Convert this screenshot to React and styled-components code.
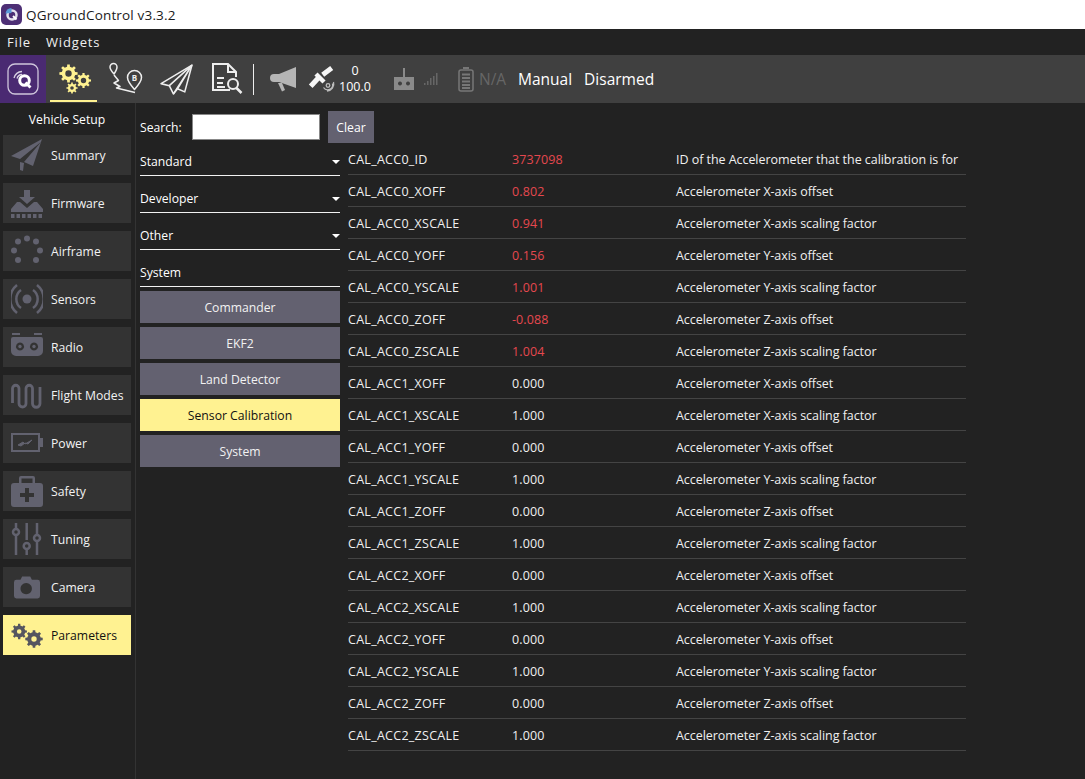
import React from "react";
import styled, { createGlobalStyle } from "styled-components";

const Global = createGlobalStyle`
  html, body { margin: 0; padding: 0; background: #222222; }
  body { font-family: "Open Sans", "Liberation Sans", sans-serif; font-size: 12.2px; color: #fff; }
  * { box-sizing: border-box; }
`;

const Page = styled.div`width: 1085px; height: 779px; overflow: hidden; display: flex; flex-direction: column; background: #222;`;
const TitleBar = styled.div`height: 29px; background: #fff; color: #1a1a1a; display: flex; align-items: center; gap: 4px; padding-left: 1px; font-size: 13.5px; letter-spacing: .17px;`;
const MenuBar = styled.div`height: 26px; background: #222; display: flex; align-items: center; gap: 15px; padding-left: 7px; font-size: 13px; letter-spacing: .85px; color: #f0f0f0;`;
const ToolBar = styled.div`height: 48px; background: #404040; display: flex; align-items: center; flex: none;`;
const LogoTile = styled.div`width: 46px; height: 48px; background: #4a2a72; display: flex; align-items: center; justify-content: center;`;
const ToolSlot = styled.div`
  width: ${p => p.$w}px; margin-left: ${p => p.$ml || 0}px; height: 48px; position: relative; flex: none;
  display: flex; align-items: center; justify-content: center;
  svg { overflow: visible; flex: none; }
`;
const ActiveBar = styled.div`position: absolute; left: 0; right: 0; bottom: 1px; height: 2px; background: #fff291;`;
const ToolDivider = styled.div`width: 1px; height: 31px; background: #eee; margin-left: 10px; flex: none;`;
const Counts = styled.div`width: 40px; margin-left: 1px; text-align: center; font-size: 12.5px; line-height: 16px; color: #fff; flex: none;`;
const NA = styled.div`margin-left: 5px; width: 34px; font-size: 15.5px; color: #666; flex: none;`;
const ModeText = styled.div`margin-left: ${p => p.$ml}px; font-size: 15.5px; color: #fff; flex: none;`;

const Main = styled.div`flex: 1; display: flex; min-height: 0;`;
const Side = styled.div`width: 136px; flex: none; border-right: 1px solid #333; padding: 9px 4px 0 3px; display: flex; flex-direction: column; gap: 8px;`;
const SideTitle = styled.div`height: 15px; line-height: 15px; text-align: center; color: #fff;`;
const SideButton = styled.div`
  height: 40px; display: flex; align-items: center; gap: 8px; padding-left: 8px; flex: none;
  background: ${p => p.$on ? "#fff291" : "#333333"}; color: ${p => p.$on ? "#111" : "#f2f2f2"};
`;
const SideIcon = styled.span`
  width: 32px; height: 32px; flex: none; display: flex; align-items: center; justify-content: center;
  color: ${p => p.$on ? "#55555f" : "#62626f"};
`;

const Filter = styled.div`width: 212px; padding: 8px 0 0 4px; flex: none;`;
const SearchRow = styled.div`display: flex; align-items: center; height: 32px;`;
const SearchLabel = styled.div`width: 52px; flex: none;`;
const SearchBox = styled.input`width: 128px; height: 26px; flex: none; border: 1px solid #888; background: #fff; padding: 0; outline: none;`;
const ClearButton = styled.button`width: 46px; height: 32px; margin-left: 8px; border: 0; padding: 0; background: #636170; color: #fff; font: inherit; flex: none;`;
const GroupList = styled.div`display: flex; flex-direction: column;`;
const Group = styled.div`
  width: 200px; height: 37px; display: flex; align-items: flex-end; justify-content: space-between;
  border-bottom: 1px solid #f2f2f2; padding-bottom: 5px;
  &:first-child { height: 33px; }
`;
const Caret = styled.span`width: 0; height: 0; border: 4px solid transparent; border-top: 4px solid #fff; margin-bottom: 2px;`;
const SubList = styled.div`margin-top: 4px; display: flex; flex-direction: column; gap: 4px;`;
const SubButton = styled.div`
  width: 200px; height: 32px; display: flex; align-items: center; justify-content: center;
  background: ${p => p.$on ? "#fff291" : "#636170"}; color: ${p => p.$on ? "#111" : "#f2f2f2"};
`;

const Table = styled.div`width: 618px; padding-top: 40px; flex: none;`;
const Row = styled.div`display: grid; grid-template-columns: 164px 164px 1fr; height: 32px; border-bottom: 1px solid #444; padding-top: 1px; align-items: center; white-space: nowrap;`;
const NameCell = styled.div`color: #f0f0f0; font-size: 12.5px; letter-spacing: .28px;`;
const ValueCell = styled.div`color: ${p => p.$red ? "#e5484f" : "#f0f0f0"}; font-size: 12.5px; letter-spacing: .1px;`;
const DescCell = styled.div`color: #f0f0f0; font-size: 12.5px; letter-spacing: -.05px;`;

const gearPath = (cx, cy, ro, ri, hole, n = 8) => {
  let d = "";
  const step = (Math.PI * 2) / n;
  for (let i = 0; i < n; i++) {
    const a = i * step;
    const pts = [[ri, a - step * .5], [ri, a - step * .27], [ro, a - step * .18], [ro, a + step * .18], [ri, a + step * .27]];
    pts.forEach(([r, t], k) => {
      d += `${i === 0 && k === 0 ? "M" : "L"}${(cx + r * Math.cos(t)).toFixed(2)} ${(cy + r * Math.sin(t)).toFixed(2)}`;
    });
  }
  d += `Z M${cx + hole} ${cy}A${hole} ${hole} 0 1 0 ${cx - hole} ${cy}A${hole} ${hole} 0 1 0 ${cx + hole} ${cy}Z`;
  return d;
};

const TitleLogo = () => (
  <svg width="21" height="21" viewBox="0 0 21 21">
    <rect width="21" height="21" rx="5" fill="#4d2f75" />
    <circle cx="11" cy="11" r="4.500" fill="none" stroke="#e6e2ee" strokeWidth="2.500" />
    <path d="M4.500 9.500a6.500 6.500 0 0 1 6-5.500v5z" fill="#5b9ad8" />
    <path d="M12 12l3.500 3.500" stroke="#fff" strokeWidth="2" />
  </svg>
);
const QLogo = () => (
  <svg width="32" height="32" viewBox="0 0 32 32">
    <rect x="1" y="1" width="30" height="30" rx="7" fill="none" stroke="#cfc6dc" strokeWidth="1.300" />
    <circle cx="17.500" cy="17.500" r="4.800" fill="none" stroke="#fff" strokeWidth="3" />
    <path d="M18.500 19.500l5 5" stroke="#fff" strokeWidth="2.800" />
    <path d="M7 15a9 9 0 0 1 8-6.500M10 15.500a5.500 5.500 0 0 1 5-4" fill="none" stroke="#d8d2e2" strokeWidth="1.300" />
  </svg>
);
const ToolGears = () => (
  <svg width="32" height="32" viewBox="0 0 32 32" fill="#fff291" fillRule="evenodd">
    <path d={gearPath(10.5, 10.5, 9.2, 6.8, 3.2)} />
    <path d={gearPath(25.500, 17.500, 7.600, 5.600, 2.700)} />
    <path d={gearPath(14, 25, 5.600, 4.100, 1.800)} />
  </svg>
);
const ParamGears = () => (
  <svg width="32" height="32" viewBox="0 0 32 32" fill="currentColor" fillRule="evenodd">
    <path d={gearPath(8.2, 12.5, 7.8, 6, 2.300)} />
    <path d={gearPath(23, 20, 8.800, 6.800, 2.700)} />
  </svg>
);
const PlanIcon = () => (
  <svg width="32" height="32" viewBox="0 0 32 32" fill="none" stroke="#eee" strokeWidth="1.500" strokeLinejoin="round">
    <path d="M3.500 0.500a3.500 3.500 0 0 1 3.500 3.500c0 2.500-3 7-3 7s-4-4.500-4-7a3.500 3.500 0 0 1 3.500-3.500z" />
    <path d="M24.500 7.500a7 7 0 0 1 7 7c0 4-7 12-7 12s-7-8-7-12a7 7 0 0 1 7-7z" />
    <path d="M4 12l4.500 5.500-4.500 2.500 6 3.500-3.500 1.500 18.500 4.500" />
    <text x="24.500" y="17.500" fontSize="8" fontWeight="700" fontFamily="Open Sans, sans-serif" textAnchor="middle" fill="#eee" stroke="none">B</text>
  </svg>
);
const FlyIcon = () => (
  <svg width="33" height="33" viewBox="0 0 32 32" fill="none" stroke="#eee" strokeWidth="1.500" strokeLinejoin="round">
    <path d="M31 2L1 20l8 2 4 8 4-5 7 3z" />
    <path d="M31 2L9 22M31 2L13 30M31 2L17 25" />
  </svg>
);
const AnalyzeIcon = () => (
  <svg width="32" height="32" viewBox="0 0 32 32" fill="none" stroke="#eee" strokeWidth="2">
    <path d="M19 27H2V1h15l8 8v5" />
    <path d="M17 1v8h8" />
    <path d="M6 15h7M6 20h6M6 24h8" />
    <circle cx="22" cy="21" r="5" />
    <path d="M25.500 25l5 5" strokeWidth="2.500" />
  </svg>
);
const Megaphone = () => (
  <svg width="27" height="27" viewBox="0 0 27 27" fill="#b5b5b5">
    <path d="M26 1L9 8H4a3.500 3.500 0 0 0 0 8h5l17 6z" />
    <path d="M8 17h4l3 7-3 1.500z" />
  </svg>
);
const Satellite = () => (
  <svg width="24" height="26" viewBox="0 0 24 26">
    <path d="M21.700 2l-9 6.700M8.300 12l-7.600 8.300" stroke="#f6f6f6" strokeWidth="5" fill="none" />
    <path d="M6 8l8 8" stroke="#f6f6f6" strokeWidth="4.500" fill="none" />
    <g fill="none" stroke="#bbb" strokeWidth="1.300">
      <circle cx="18" cy="19.500" r="1.800" />
      <path d="M13.500 21.500a5 5 0 0 0 9-4M17 25a7 7 0 0 0 6.500-9" />
    </g>
  </svg>
);
const RC = () => (
  <svg width="20" height="22" viewBox="0 0 20 22" fill="#8a8a8a">
    <rect x="9" y="0" width="2" height="10" />
    <path fillRule="evenodd" d="M0 9h20v13H0zM6 13.500a2 2 0 1 0 .01 0zM14 13.500a2 2 0 1 0 .01 0z" />
  </svg>
);
const Signal = () => (
  <svg width="14" height="12" viewBox="0 0 14 12" fill="#666">
    <rect x="0" y="10" width="1.500" height="2" /><rect x="3" y="8" width="1.500" height="4" />
    <rect x="6" y="5" width="1.500" height="7" /><rect x="9" y="3" width="1.500" height="9" />
    <rect x="12" y="0" width="1.500" height="12" />
  </svg>
);
const Battery = () => (
  <svg width="16" height="25" viewBox="0 0 16 25" fill="none" stroke="#777" strokeWidth="1.500">
    <rect x="1" y="3" width="14" height="21" rx="2" />
    <path d="M5 1h6" strokeWidth="2" />
    <path d="M4 7.500h8M4 11h8M4 14.500h8M4 18h8M4 21h8" strokeWidth="2" />
  </svg>
);

const I = { fill: "currentColor", width: 32, height: 32, viewBox: "0 0 32 32" };
const SummaryIcon = () => (
  <svg {...I}><path d="M31 0L0 17l9 3 21-17-17 20 9 4z" /><path d="M13 24l-1 8-3-1v-8z" /></svg>
);
const FirmwareIcon = () => (
  <svg {...I}><path d="M13 3h6v7h5l-8 7-8-7h5z" /><path d="M0 22l6-7h3l7 6 7-6h3l6 7v3H0z" />
    {[0, 5.500, 11, 16.500, 22, 27.500].map(x => <rect key={x} x={x} y="27" width="3.500" height="4" />)}
  </svg>
);
const AirframeIcon = () => (
  <svg {...I}>
    {[[16, 3.500], [25, 6.500], [29, 15.500], [25, 25], [7, 25], [3, 15.500], [7, 6.500]].map(([x, y]) => <circle key={x + "" + y} cx={x} cy={y} r="3" />)}
  </svg>
);
const SensorsIcon = () => (
  <svg {...I} fill="none" stroke="currentColor" strokeWidth="2.500">
    <circle cx="16" cy="16" r="4.500" fill="currentColor" stroke="none" />
    <path d="M10 7a11 11 0 0 0 0 18M22 7a11 11 0 0 1 0 18" />
    <path d="M6 2a18 18 0 0 0 0 28M26 2a18 18 0 0 1 0 28" />
  </svg>
);
const RadioIcon = () => (
  <svg {...I}>
    <path fillRule="evenodd" d="M2 6h28a2 2 0 0 1 2 2v12a5 5 0 0 1-5 5H5a5 5 0 0 1-5-5V8a2 2 0 0 1 2-2zM9 11.500a4 4 0 1 0 .01 0zM23 11.500a4 4 0 1 0 .01 0z" />
    <circle cx="9" cy="15.500" r="1.700" /><circle cx="23" cy="15.500" r="1.700" />
    <rect x="1" y="2" width="8" height="2" /><rect x="23" y="2" width="8" height="2" />
  </svg>
);
const ModesIcon = () => (
  <svg {...I} fill="none" stroke="currentColor" strokeWidth="2.800">
    <path d="M1.500 24V9.500a3.250 3.250 0 0 1 6.500 0V24.500a3.500 3.500 0 0 0 7 0V9.500a3.250 3.250 0 0 1 6.500 0V24.500a3.750 3.750 0 0 0 7.500 0V8" />
  </svg>
);
const PowerIcon = () => (
  <svg {...I} fill="none" stroke="currentColor" strokeWidth="2">
    <rect x="1" y="7" width="27" height="17" />
    <rect x="29" y="11" width="3" height="9" fill="currentColor" stroke="none" />
    <path d="M7 18l5-3 2 2 7-4-4 4-3-1-4 3z" fill="currentColor" strokeWidth="1" />
  </svg>
);
const SafetyIcon = () => (
  <svg {...I}>
    <path fillRule="evenodd" d="M10 1h12a2 2 0 0 1 2 2v5h5a3 3 0 0 1 3 3v18a3 3 0 0 1-3 3H3a3 3 0 0 1-3-3V11a3 3 0 0 1 3-3h5V3a2 2 0 0 1 2-2zM10.500 3.500V8h11V3.500zM14 13v5H9v4h5v5h4v-5h5v-4h-5v-5z" />
  </svg>
);
const TuningIcon = () => (
  <svg {...I} fill="none" stroke="currentColor" strokeWidth="2.500">
    <path d="M5 0v6M5 12v20M15.700 0v17M15.700 26v6M26 0v12M26 18v14" />
    <circle cx="5" cy="9" r="3" /><circle cx="15.700" cy="23" r="3" /><circle cx="26" cy="15" r="3" />
  </svg>
);
const CameraIcon = () => (
  <svg {...I} width="26" height="26">
    <path fillRule="evenodd" d="M10 3h10l2 4h7a3 3 0 0 1 3 3v17a3 3 0 0 1-3 3H3a3 3 0 0 1-3-3V10a3 3 0 0 1 3-3h5zM15 11a7 7 0 1 0 .01 0z" />
  </svg>
);

const sideItems = [
  ["Summary", SummaryIcon], ["Firmware", FirmwareIcon], ["Airframe", AirframeIcon], ["Sensors", SensorsIcon],
  ["Radio", RadioIcon], ["Flight Modes", ModesIcon], ["Power", PowerIcon], ["Safety", SafetyIcon],
  ["Tuning", TuningIcon], ["Camera", CameraIcon],
];

const desc = {
  XOFF: "Accelerometer X-axis offset", XSCALE: "Accelerometer X-axis scaling factor",
  YOFF: "Accelerometer Y-axis offset", YSCALE: "Accelerometer Y-axis scaling factor",
  ZOFF: "Accelerometer Z-axis offset", ZSCALE: "Accelerometer Z-axis scaling factor",
};
const rows = [
  ["CAL_ACC0_ID", "3737098", "ID of the Accelerometer that the calibration is for", true],
  ...[["XOFF", "0.802"], ["XSCALE", "0.941"], ["YOFF", "0.156"], ["YSCALE", "1.001"], ["ZOFF", "-0.088"], ["ZSCALE", "1.004"]]
    .map(([k, v]) => [`CAL_ACC0_${k}`, v, desc[k], true]),
  ...[1, 2].flatMap(n => ["XOFF", "XSCALE", "YOFF", "YSCALE", "ZOFF", "ZSCALE"]
    .map(k => [`CAL_ACC${n}_${k}`, k.includes("OFF") ? "0.000" : "1.000", desc[k], false])),
];

export default function App() {
  return (
    <Page>
      <Global />
      <TitleBar><TitleLogo />QGroundControl v3.3.2</TitleBar>
      <MenuBar><span>File</span><span>Widgets</span></MenuBar>
      <ToolBar>
        <LogoTile><QLogo /></LogoTile>
        <ToolSlot $w={47} $ml={4}><ToolGears /><ActiveBar /></ToolSlot>
        <ToolSlot $w={32} $ml={13}><PlanIcon /></ToolSlot>
        <ToolSlot $w={33} $ml={18}><FlyIcon /></ToolSlot>
        <ToolSlot $w={32} $ml={18}><AnalyzeIcon /></ToolSlot>
        <ToolDivider />
        <ToolSlot $w={27} $ml={16}><Megaphone /></ToolSlot>
        <ToolSlot $w={24} $ml={13}><Satellite /></ToolSlot>
        <Counts><div>0</div><div>100.0</div></Counts>
        <ToolSlot $w={20} $ml={19}><RC /></ToolSlot>
        <ToolSlot $w={14} $ml={10}><Signal /></ToolSlot>
        <ToolSlot $w={16} $ml={20}><Battery /></ToolSlot>
        <NA>N/A</NA>
        <ModeText $ml={5}>Manual</ModeText>
        <ModeText $ml={12}>Disarmed</ModeText>
      </ToolBar>
      <Main>
        <Side>
          <SideTitle>Vehicle Setup</SideTitle>
          {sideItems.map(([label, Icon]) => (
            <SideButton key={label}><SideIcon><Icon /></SideIcon>{label}</SideButton>
          ))}
          <SideButton $on><SideIcon $on><ParamGears /></SideIcon>Parameters</SideButton>
        </Side>
        <Filter>
          <SearchRow>
            <SearchLabel>Search:</SearchLabel>
            <SearchBox />
            <ClearButton>Clear</ClearButton>
          </SearchRow>
          <GroupList>
            <Group>Standard<Caret /></Group>
            <Group>Developer<Caret /></Group>
            <Group>Other<Caret /></Group>
            <Group>System</Group>
          </GroupList>
          <SubList>
            <SubButton>Commander</SubButton>
            <SubButton>EKF2</SubButton>
            <SubButton>Land Detector</SubButton>
            <SubButton $on>Sensor Calibration</SubButton>
            <SubButton>System</SubButton>
          </SubList>
        </Filter>
        <Table>
          {rows.map(([name, value, text, red]) => (
            <Row key={name}>
              <NameCell>{name}</NameCell>
              <ValueCell $red={red}>{value}</ValueCell>
              <DescCell>{text}</DescCell>
            </Row>
          ))}
        </Table>
      </Main>
    </Page>
  );
}
